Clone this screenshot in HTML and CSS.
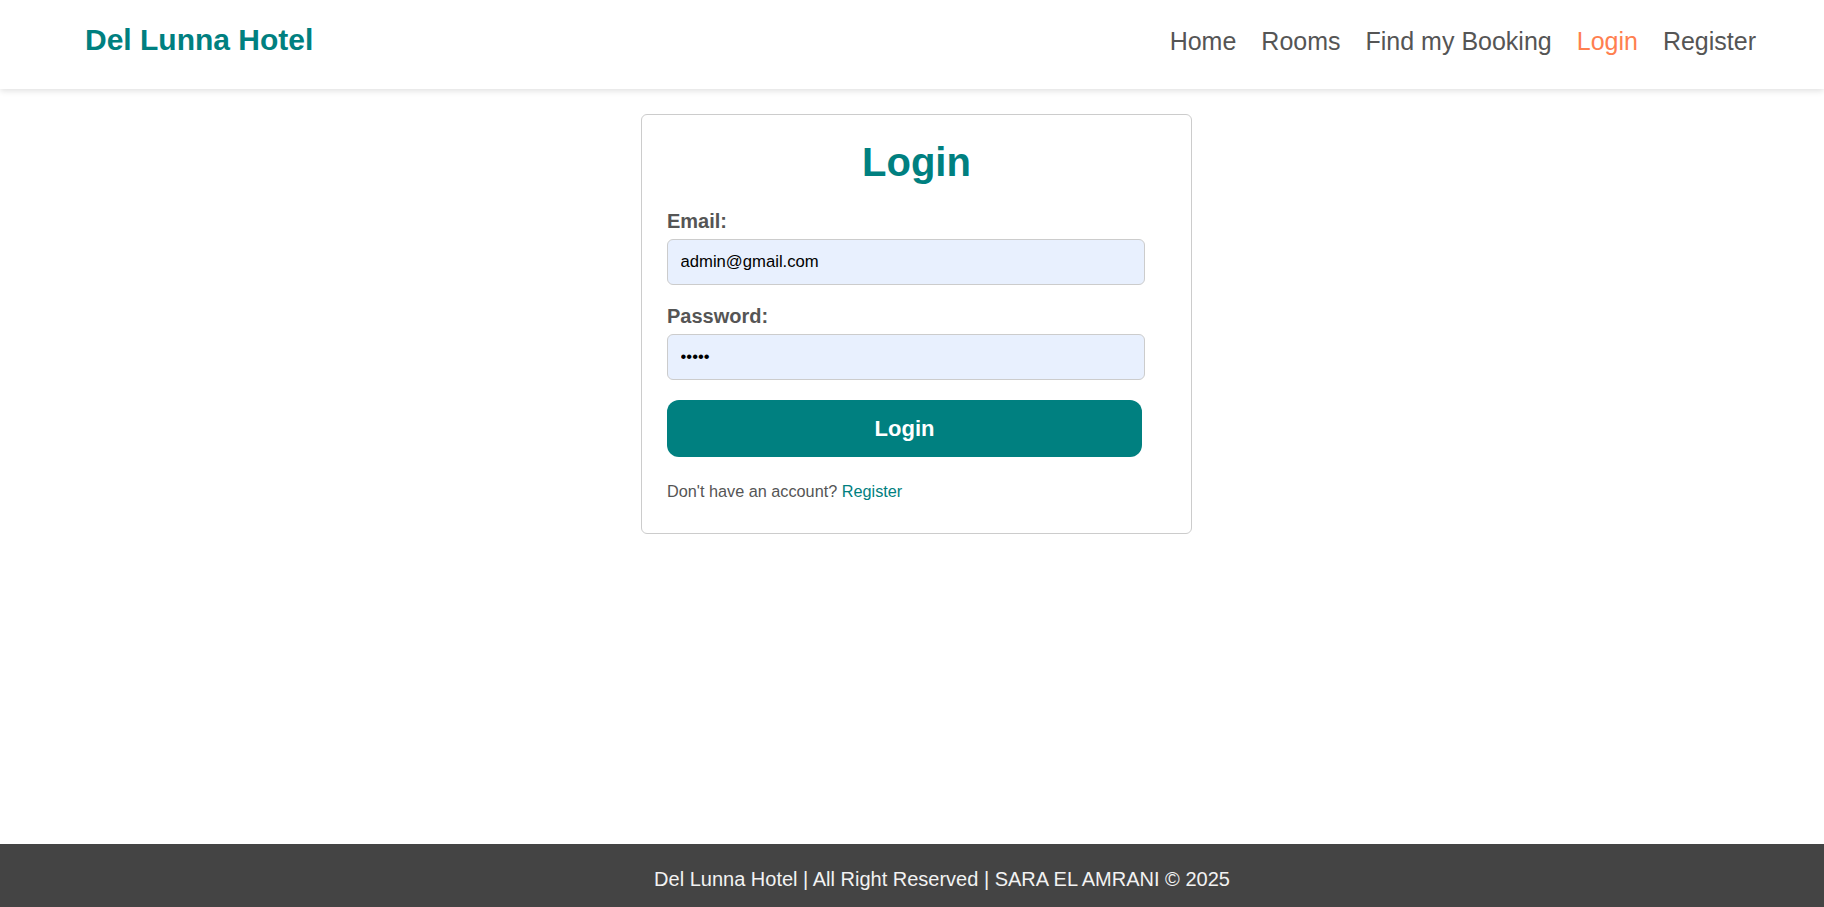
FILE: index.html
```html
<!DOCTYPE html>
<html lang="en">
<head>
<meta charset="utf-8">
<title>Login - Del Lunna Hotel</title>
<link rel="stylesheet" href="styles.css">
</head>
<body>
<header class="site-header">
  <div class="logo">Del Lunna Hotel</div>
  <nav class="nav">
    <a href="#" class="nav-link">Home</a>
    <a href="#" class="nav-link">Rooms</a>
    <a href="#" class="nav-link">Find my Booking</a>
    <a href="#" class="nav-link active">Login</a>
    <a href="#" class="nav-link">Register</a>
  </nav>
</header>
<main class="main">
  <div class="card">
    <h2 class="card-title">Login</h2>
    <form class="form">
      <label class="label" for="email">Email:</label>
      <input class="input" id="email" type="email" value="admin@gmail.com">
      <label class="label" for="password">Password:</label>
      <input class="input" id="password" type="password" value="12345">
      <button class="btn" type="button">Login</button>
    </form>
    <p class="note">Don't have an account? <a href="#" class="note-link">Register</a></p>
  </div>
</main>
<footer class="footer">Del Lunna Hotel | All Right Reserved | SARA EL AMRANI © 2025</footer>
</body>
</html>
```

FILE: styles.css
```css
* { box-sizing: border-box; }
html, body { margin: 0; padding: 0; }
body {
  font-family: "Liberation Sans", Arial, sans-serif;
  background: #fff;
  min-height: 100vh;
  display: flex;
  flex-direction: column;
}
.site-header {
  height: 89px;
  padding: 22.5px 68px 0 85px;
  display: flex;
  justify-content: space-between;
  align-items: baseline;
  background: #fff;
  box-shadow: 0 2px 6px rgba(0,0,0,0.12);
  position: relative;
  z-index: 1;
}
.logo {
  font-size: 30px;
  font-weight: bold;
  color: #008080;
}
.nav {
  display: flex;
  gap: 25px;
  align-items: baseline;
}
.nav-link {
  font-size: 25px;
  color: #555;
  text-decoration: none;
}
.nav-link.active { color: #ff7f50; }
.main {
  flex: 1;
  padding: 25px 0 0 9px;
  display: flex;
  justify-content: center;
  align-items: flex-start;
}
.card {
  width: 551px;
  border: 1px solid #ccc;
  border-radius: 6px;
  padding: 25px 25px 25px;
  background: #fff;
}
.card-title {
  margin: 0 0 25px;
  text-align: center;
  font-size: 40px;
  font-weight: bold;
  color: #008080;
}
.form { display: flex; flex-direction: column; align-items: flex-start; }
.label {
  display: block;
  font-size: 20px;
  font-weight: bold;
  color: #555;
  margin-bottom: 5.75px;
}
.input {
  width: 478px;
  height: 46.7px;
  padding: 0 12.5px;
  border: 1px solid #ccc;
  border-radius: 6px;
  background: #e8f0fe;
  font-family: "Liberation Sans", Arial, sans-serif;
  font-size: 16.67px;
  color: #000;
  margin: 0 0 19.5px;
  outline: none;
}
.btn {
  width: 475px;
  height: 57.3px;
  border: none;
  border-radius: 12px;
  background: #008080;
  color: #fff;
  font-family: "Liberation Sans", Arial, sans-serif;
  font-size: 22px;
  font-weight: bold;
  cursor: pointer;
}
.note {
  margin: 25px 0 6.5px;
  font-size: 16.25px;
  color: #555;
}
.note-link { color: #008080; text-decoration: none; }
.footer {
  background: #444;
  color: #f2f2f2;
  font-size: 20px;
  text-align: center;
  padding: 24px 0 16px 60px;
}
```
